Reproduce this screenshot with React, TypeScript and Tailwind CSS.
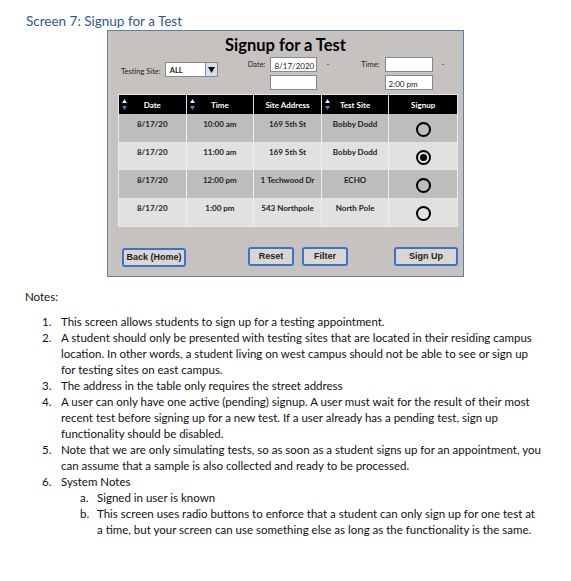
import React from 'react';

const rows = [
  { date: '8/17/20', time: '10:00 am', addr: '169 5th St', site: 'Bobby Dodd', on: false },
  { date: '8/17/20', time: '11:00 am', addr: '169 5th St', site: 'Bobby Dodd', on: true },
  { date: '8/17/20', time: '12:00 pm', addr: '1 Techwood Dr', site: 'ECHO', on: false },
  { date: '8/17/20', time: '1:00 pm', addr: '543 Northpole', site: 'North Pole', on: false },
];

function Sort() {
  return (
    <svg width="5" height="11" viewBox="0 0 5 11" className="shrink-0">
      <path d="M2.5 0 L5 4 L0 4 Z" fill="#dbe6f5" />
      <path d="M0 7 L5 7 L2.5 11 Z" fill="#4a7fd0" />
    </svg>
  );
}

function Radio({ on }: { on: boolean }) {
  return (
    <div className="w-[15px] h-[15px] rounded-full border-2 border-black flex items-center justify-center">
      {on && <div className="w-[7px] h-[7px] rounded-full bg-black" />}
    </div>
  );
}

function Btn({ children, w }: { children: React.ReactNode; w: string }) {
  return (
    <button
      className={`${w} h-[19px] rounded-[3px] border-2 border-[#3b73c8] bg-[#d9d6d4] text-[9px] font-bold text-[#222] font-['Liberation_Sans',sans-serif] leading-none`}
    >
      {children}
    </button>
  );
}

function Head({ label, sort }: { label: string; sort?: boolean }) {
  return (
    <div className="flex items-center px-[3px] border-r border-[#ddd] last:border-r-0">
      {sort ? <Sort /> : <span className="w-[5px]" />}
      <span className="flex-1 text-center pr-[5px]">{label}</span>
    </div>
  );
}

export default function App() {
  return (
    <div className="w-[571px] h-[581px] bg-white font-['Lato',sans-serif] text-[#111] relative">
      <div className="pt-[12px] pl-[26px] text-[13.5px] text-[#2f5597] leading-[18px]">
        Screen 7: Signup for a Test
      </div>

      <div className="ml-[107px] w-[357px] h-[247px] bg-[#c6c2c0] border border-[#5c7fae] flex flex-col">
        <div className="text-center font-bold text-[16.5px] leading-[20px] pt-[4px] text-black">
          Signup for a Test
        </div>

        <div className="flex text-[7.5px] text-[#222] h-[38px]">
          <div className="flex items-start pl-[13px] pt-[7px] gap-[4px]">
            <span className="pt-[4px]">Testing Site:</span>
            <div className="flex w-[53px] h-[15px] bg-white border border-[#888]">
              <span className="flex-1 pl-[4px] pt-[2px] font-bold">ALL</span>
              <div className="w-[12px] bg-[#d5dff0] border-l border-[#7a9ad0] flex items-center justify-center">
                <svg width="7" height="6" viewBox="0 0 7 6">
                  <path d="M0 0 L7 0 L3.5 6 Z" fill="#111" />
                </svg>
              </div>
            </div>
          </div>

          <div className="flex items-start pl-[30px] pt-[2px] gap-[5px]">
            <span className="pt-[2px]">Date:</span>
            <div className="flex flex-col gap-[3px]">
              <div className="w-[47px] h-[15px] bg-white border border-[#888] pl-[3px] pt-[2px] text-[8px]">8/17/2020</div>
              <div className="w-[47px] h-[15px] bg-white border border-[#888]" />
            </div>
            <span className="pl-[4px] pt-[2px]">-</span>
          </div>

          <div className="flex items-start pl-[32px] pt-[2px] gap-[5px]">
            <span className="pt-[2px]">Time:</span>
            <div className="flex flex-col gap-[3px]">
              <div className="w-[48px] h-[15px] bg-white border border-[#888]" />
              <div className="w-[48px] h-[15px] bg-white border border-[#888] pl-[3px] pt-[2px] text-[8px]">2:00 pm</div>
            </div>
            <span className="pl-[4px] pt-[2px]">-</span>
          </div>
        </div>

        <div className="mx-[10px] mt-[1px] w-[340px] border border-[#e8e8e8] text-[8px] font-bold">
          <div className="grid grid-cols-5 h-[19px] bg-black text-white">
            <Head label="Date" sort />
            <Head label="Time" sort />
            <Head label="Site Address" />
            <Head label="Test Site" sort />
            <Head label="Signup" />
          </div>
          {rows.map((r, i) => (
            <div
              key={i}
              className={`grid grid-cols-5 h-[28px] ${i % 2 === 0 ? 'bg-[#bdbdbd]' : 'bg-[#e1e1e1]'} text-[#222]`}
            >
              <div className="text-center pt-[4px] border-r border-[#eee]">{r.date}</div>
              <div className="text-center pt-[4px] border-r border-[#eee]">{r.time}</div>
              <div className="text-center pt-[4px] border-r border-[#eee]">{r.addr}</div>
              <div className="text-center pt-[4px] border-r border-[#eee]">{r.site}</div>
              <div className="flex justify-center pt-[8px]">
                <Radio on={r.on} />
              </div>
            </div>
          ))}
        </div>

        <div className="flex items-end pl-[14px] pr-[5px] mt-[14px]">
          <Btn w="w-[64px]">Back (Home)</Btn>
          <div className="flex gap-[8px] ml-[62px] mb-[1px]">
            <Btn w="w-[46px]">Reset</Btn>
            <Btn w="w-[46px]">Filter</Btn>
          </div>
          <div className="ml-auto mb-[1px]">
            <Btn w="w-[64px]">Sign Up</Btn>
          </div>
        </div>
      </div>

      <div className="pl-[25px] pt-[12px] text-[11.5px] leading-[16px]">Notes:</div>
      <ol className="mt-[9px] text-[11.5px] leading-[16px] text-[#111]">
        {[
          'This screen allows students to sign up for a testing appointment.',
          'A student should only be presented with testing sites that are located in their residing campus location. In other words, a student living on west campus should not be able to see or sign up for testing sites on east campus.',
          'The address in the table only requires the street address',
          'A user can only have one active (pending) signup. A user must wait for the result of their most recent test before signing up for a new test. If a user already has a pending test, sign up functionality should be disabled.',
          'Note that we are only simulating tests, so as soon as a student signs up for an appointment, you can assume that a sample is also collected and ready to be processed.',
        ].map((t, i) => (
          <li key={i} className="flex">
            <span className="w-[61px] shrink-0 pl-[42px]">{i + 1}.</span>
            <span className="w-[480px]">{t}</span>
          </li>
        ))}
        <li className="flex">
          <span className="w-[61px] shrink-0 pl-[42px]">6.</span>
          <div className="w-[480px]">
            <div>System Notes</div>
            <ol>
              <li className="flex">
                <span className="w-[36px] shrink-0 pl-[19px]">a.</span>
                <span>Signed in user is known</span>
              </li>
              <li className="flex">
                <span className="w-[36px] shrink-0 pl-[19px]">b.</span>
                <span className="w-[450px]">
                  This screen uses radio buttons to enforce that a student can only sign up for one test at a time, but your screen can use something else as long as the functionality is the same.
                </span>
              </li>
            </ol>
          </div>
        </li>
      </ol>
    </div>
  );
}
